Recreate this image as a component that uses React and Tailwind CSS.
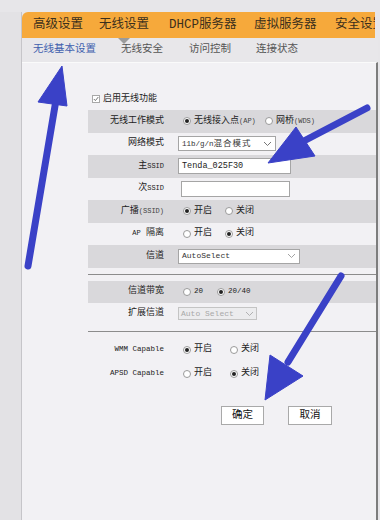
import React from "react";

const mono = { fontFamily: '"Liberation Mono", "Noto Sans CJK SC", monospace' };

function Radio({ on }) {
  return (
    <span className="w-[8px] h-[8px] rounded-full border border-[#9a9a9a] bg-white flex items-center justify-center shrink-0">
      {on && <span className="w-[4px] h-[4px] rounded-full bg-[#222]" />}
    </span>
  );
}

function Option({ on, w, children }) {
  return (
    <div className={`flex items-center gap-[3px] ${w}`}>
      <Radio on={on} />
      <span className="text-[9px] text-[#222] leading-none whitespace-nowrap">{children}</span>
    </div>
  );
}

function Chevron({ color = "#666" }) {
  return (
    <svg width="9" height="6" viewBox="0 0 9 6">
      <path d="M1 1 L4.5 4.5 L8 1" fill="none" stroke={color} strokeWidth="0.9" />
    </svg>
  );
}

function Row({ label, gray, children, h }) {
  return (
    <div className={`flex items-center ${h || "h-[22.5px]"} ${gray ? "bg-[#d9d8db]" : ""}`}>
      <div className="w-[76px] shrink-0 text-right text-[9px] text-[#222] leading-none whitespace-nowrap">{label}</div>
      <div className="pl-[14px] flex items-center">{children}</div>
    </div>
  );
}

function Divider() {
  return <div className="h-px bg-[#8c8c8c] my-[6px]" />;
}

export default function App() {
  return (
    <div className="relative w-[380px] h-[520px] overflow-hidden bg-[#e7e6e9] flex flex-col" style={mono}>
      <div className="h-[12px] shrink-0" />
      <div className="flex flex-1">
        <div className="w-[22px] shrink-0 bg-[#e3e2e5] border-r border-[#c6c5c9]" />
        <div className="flex-1 min-w-0 flex flex-col">
          {/* Top nav */}
          <div className="h-[26px] bg-[#f6a93b] rounded-tl-[6px] mr-[3px] flex items-center pl-[11px] text-[12.5px] text-[#3b2f1c] whitespace-nowrap overflow-hidden">
            <span className="w-[66px] shrink-0">高级设置</span>
            <span className="w-[70px] shrink-0">无线设置</span>
            <span className="w-[85px] shrink-0">DHCP服务器</span>
            <span className="w-[81px] shrink-0">虚拟服务器</span>
            <span className="shrink-0">安全设置</span>
          </div>
          {/* Sub nav */}
          <div className="relative h-[24px] bg-[#e8e7ea] flex items-center pl-[11px] text-[10.5px] text-[#555] whitespace-nowrap">
            <span className="absolute left-[96px] top-0 w-0 h-0 border-l-[6px] border-r-[6px] border-t-[6px] border-l-transparent border-r-transparent border-t-[#9b9b9b]" />
            <span className="w-[88px] text-[#3f5fae]">无线基本设置</span>
            <span className="w-[68px]">无线安全</span>
            <span className="w-[67px]">访问控制</span>
            <span>连接状态</span>
          </div>
          {/* Content */}
          <div className="flex-1 bg-[#f2f1f4] border-t border-[#fafafa] border-r-2 border-r-[#7d7d7d] pl-[66px] pt-[28px]">
            <div className="flex items-center h-[16px] ml-[4px] gap-[3px] mb-[3px]">
              <span className="w-[8px] h-[8px] border border-[#a8a8a8] bg-white flex items-center justify-center">
                <svg width="6" height="6" viewBox="0 0 6 6">
                  <path d="M0.8 3 L2.4 4.6 L5.3 1" fill="none" stroke="#666" strokeWidth="0.9" />
                </svg>
              </span>
              <span className="text-[9px] text-[#222] leading-none">启用无线功能</span>
            </div>

            <Row label="无线工作模式" gray>
              <div className="ml-[5px] flex items-center">
                <Option on w="w-[82px]">
                  无线接入点<span className="text-[7px] text-[#444]">(AP)</span>
                </Option>
                <Option w="w-[60px]">
                  网桥<span className="text-[7px] text-[#444]">(WDS)</span>
                </Option>
              </div>
            </Row>
            <Row label="网络模式">
              <div className="w-[98px] h-[15px] border border-[#a5a5a5] bg-white flex items-center justify-between px-[3px]">
                <span className="text-[7.5px] text-[#333] leading-none whitespace-nowrap">
                  11b/g/n<span className="text-[8.5px] tracking-[1px]">混合模式</span>
                </span>
                <Chevron />
              </div>
            </Row>
            <Row label={<>主<span className="text-[7px]">SSID</span></>} gray>
              <div className="w-[113px] h-[16px] border border-[#a5a5a5] bg-white flex items-center px-[3px]">
                <span className="text-[8.5px] text-[#222] leading-none">Tenda_025F30</span>
              </div>
            </Row>
            <Row label={<>次<span className="text-[7px]">SSID</span></>}>
              <div className="ml-[3px] w-[109px] h-[16px] border border-[#a5a5a5] bg-white" />
            </Row>
            <Row label={<>广播<span className="text-[7px] text-[#444]">(SSID)</span></>} gray>
              <div className="ml-[5px] flex items-center">
                <Option on w="w-[42px]">开启</Option>
                <Option>关闭</Option>
              </div>
            </Row>
            <Row label={<><span className="text-[7px]">AP</span> 隔离</>}>
              <div className="ml-[5px] flex items-center">
                <Option w="w-[42px]">开启</Option>
                <Option on>关闭</Option>
              </div>
            </Row>
            <Row label="信道" gray>
              <div className="w-[122px] h-[15px] border border-[#a5a5a5] bg-white flex items-center justify-between px-[3px]">
                <span className="text-[8px] text-[#333] leading-none">AutoSelect</span>
                <Chevron color="#999" />
              </div>
            </Row>

            <Divider />

            <Row label="信道带宽" gray h="h-[22px]">
              <div className="ml-[5px] flex items-center">
                <Option w="w-[34px]">
                  <span className="text-[7.5px]">20</span>
                </Option>
                <Option on>
                  <span className="text-[7.5px]">20/40</span>
                </Option>
              </div>
            </Row>
            <Row label="扩展信道" h="h-[22px]">
              <div className="w-[79px] h-[13px] border border-[#c4c4c4] bg-[#ececee] flex items-center justify-between px-[2px]">
                <span className="text-[8px] text-[#a8a8a8] leading-none whitespace-nowrap">Auto Select</span>
                <Chevron color="#aaa" />
              </div>
            </Row>

            <Divider />

            <Row label={<span className="text-[7.5px]">WMM Capable</span>} h="h-[24px]">
              <div className="ml-[5px] flex items-center">
                <Option on w="w-[47px]">开启</Option>
                <Option>关闭</Option>
              </div>
            </Row>
            <Row label={<span className="text-[7.5px]">APSD Capable</span>} h="h-[24px]">
              <div className="ml-[5px] flex items-center">
                <Option w="w-[47px]">开启</Option>
                <Option on>关闭</Option>
              </div>
            </Row>

            <div className="flex items-center gap-[24px] pl-[133px] mt-[20px]">
              <button className="w-[43px] h-[19px] bg-white border border-[#a9a9a9] text-[10.5px] text-[#111] leading-none">确定</button>
              <button className="w-[44px] h-[19px] bg-white border border-[#a9a9a9] text-[10.5px] text-[#111] leading-none">取消</button>
            </div>
          </div>
        </div>
        <div className="w-[2px] shrink-0" />
      </div>

      {/* annotation arrows */}
      <svg className="absolute inset-0 pointer-events-none" width="380" height="520" viewBox="0 0 380 520">
        <g fill="#3a41c7" stroke="#3a41c7">
          <line x1="28" y1="266" x2="56" y2="100" strokeWidth="7" strokeLinecap="round" />
          <polygon points="62,66 38,102 67,106" strokeWidth="1" strokeLinejoin="round" />
          <line x1="367" y1="108" x2="300" y2="143" strokeWidth="7" strokeLinecap="round" />
          <polygon points="268,163 296,127 315,156" strokeWidth="1" strokeLinejoin="round" />
          <line x1="341" y1="276" x2="288" y2="362" strokeWidth="7" strokeLinecap="round" />
          <polygon points="265,400 270,355 303,376" strokeWidth="1" strokeLinejoin="round" />
        </g>
      </svg>
    </div>
  );
}
